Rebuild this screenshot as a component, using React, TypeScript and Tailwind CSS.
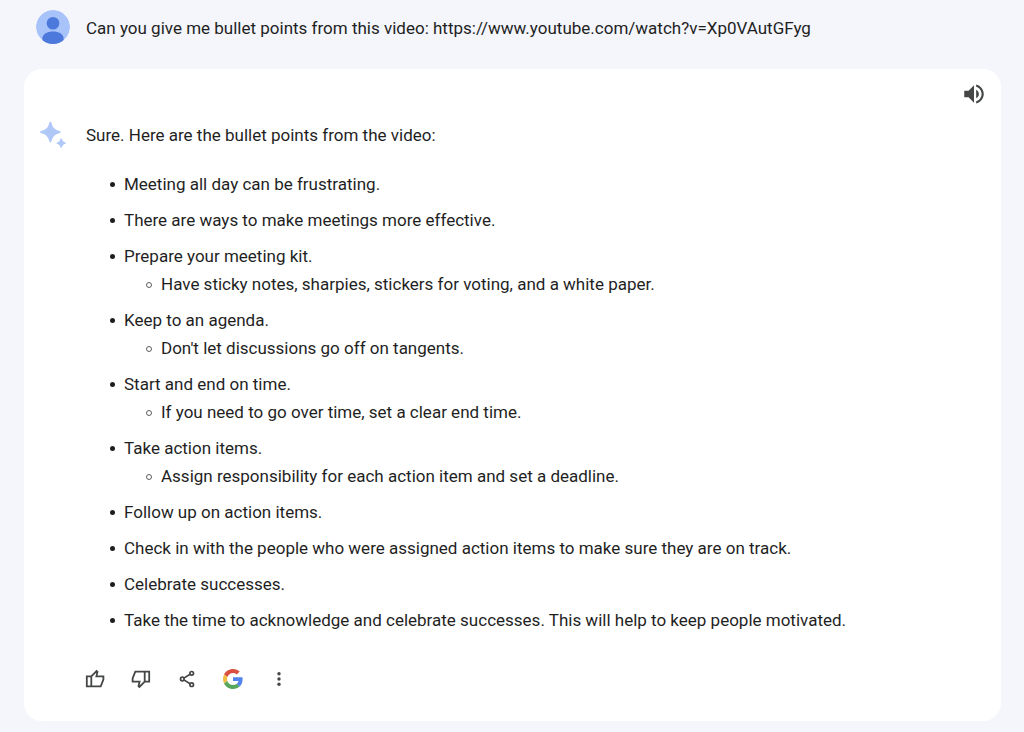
import type { ReactNode } from "react";

type Point = {
  text: string;
  children?: string[];
};

const points: Point[] = [
  { text: "Meeting all day can be frustrating." },
  { text: "There are ways to make meetings more effective." },
  {
    text: "Prepare your meeting kit.",
    children: [
      "Have sticky notes, sharpies, stickers for voting, and a white paper.",
    ],
  },
  {
    text: "Keep to an agenda.",
    children: ["Don't let discussions go off on tangents."],
  },
  {
    text: "Start and end on time.",
    children: ["If you need to go over time, set a clear end time."],
  },
  {
    text: "Take action items.",
    children: [
      "Assign responsibility for each action item and set a deadline.",
    ],
  },
  { text: "Follow up on action items." },
  {
    text: "Check in with the people who were assigned action items to make sure they are on track.",
  },
  { text: "Celebrate successes." },
  {
    text: "Take the time to acknowledge and celebrate successes. This will help to keep people motivated.",
  },
];

function Avatar() {
  return (
    <svg viewBox="0 0 34 34" className="size-[34px] shrink-0" aria-hidden="true">
      <defs>
        <clipPath id="avatar-clip">
          <circle cx="17" cy="17" r="17" />
        </clipPath>
      </defs>
      <g clipPath="url(#avatar-clip)">
        <circle cx="17" cy="17" r="17" fill="#a8c3fa" />
        <circle cx="17" cy="13.2" r="6.3" fill="#4d79dc" />
        <path
          d="M6.4 34v-5.6C6.4 24 11.5 21.6 17 21.6S27.6 24 27.6 28.4V34z"
          fill="#4d79dc"
        />
      </g>
    </svg>
  );
}

function Sparkle() {
  return (
    <svg
      viewBox="0 0 34 34"
      className="size-[34px] shrink-0"
      fill="#afc8f8"
      aria-hidden="true"
    >
      <path d="M14.4 3.8c.8 0 .9.6 1.1 1.3 1.2 4.5 3.4 6.7 7.9 7.9.8.2 1.3.4 1.3 1.1s-.5.9-1.3 1.1c-4.5 1.2-6.7 3.4-7.9 7.9-.2.8-.3 1.3-1.1 1.3s-.9-.5-1.1-1.3c-1.2-4.5-3.4-6.7-7.9-7.9-.8-.2-1.3-.4-1.3-1.1s.5-.9 1.3-1.1c4.5-1.2 6.7-3.4 7.9-7.9.2-.7.3-1.3 1.1-1.3z" />
      <path d="M25.2 20.2c.5 0 .6.3.7.7.6 2 1.5 3 3.4 3.5.4.1.7.3.7.7s-.3.6-.7.7c-1.9.5-2.8 1.5-3.4 3.5-.1.4-.2.7-.7.7s-.6-.3-.7-.7c-.6-2-1.5-3-3.4-3.5-.4-.1-.7-.3-.7-.7s.3-.6.7-.7c1.9-.5 2.8-1.5 3.4-3.5.1-.4.2-.7.7-.7z" />
    </svg>
  );
}

function ThumbIcon({ down = false }: { down?: boolean }) {
  return (
    <svg
      viewBox="0 0 24 24"
      className={down ? "size-6 rotate-180" : "size-6"}
      fill="none"
      stroke="currentColor"
      strokeWidth="1.8"
    >
      <path d="M8.3 9.4 13.6 4l.9.8-1.1 4.6h7v3.2l-2.7 6.8H3.8v-10h4.5v10" />
    </svg>
  );
}

function ShareIcon() {
  return (
    <svg
      viewBox="0 0 24 24"
      className="size-6"
      fill="none"
      stroke="currentColor"
      strokeWidth="1.7"
    >
      <path d="m8.9 11.1 6.2-3.9M8.9 12.9l6.2 3.9" />
      <circle cx="7.3" cy="12" r="1.8" />
      <circle cx="16.7" cy="6.3" r="1.8" />
      <circle cx="16.7" cy="17.7" r="1.8" />
    </svg>
  );
}

function GoogleIcon() {
  return (
    <svg viewBox="0 0 48 48" className="size-5">
      <path
        fill="#d9503f"
        d="M24 9.5c3.54 0 6.71 1.22 9.21 3.6l6.85-6.85C35.9 2.38 30.47 0 24 0 14.62 0 6.51 5.38 2.56 13.22l7.98 6.19C12.43 13.72 17.74 9.5 24 9.5z"
      />
      <path
        fill="#5383ec"
        d="M46.98 24.55c0-1.57-.15-3.09-.38-4.55H24v9.02h12.94c-.58 2.96-2.26 5.48-4.78 7.18l7.73 6c4.51-4.18 7.09-10.36 7.09-17.65z"
      />
      <path
        fill="#f2bd42"
        d="M10.53 28.59c-.48-1.45-.76-2.99-.76-4.59s.27-3.14.76-4.59l-7.98-6.19C.92 16.46 0 20.12 0 24c0 3.88.92 7.54 2.56 10.78l7.97-6.19z"
      />
      <path
        fill="#58a65c"
        d="M24 48c6.48 0 11.93-2.13 15.89-5.81l-7.73-6c-2.15 1.45-4.92 2.3-8.16 2.3-6.26 0-11.57-4.22-13.47-9.91l-7.98 6.19C6.51 42.62 14.62 48 24 48z"
      />
    </svg>
  );
}

function MoreIcon() {
  return (
    <svg viewBox="0 0 24 24" className="size-6" fill="currentColor">
      <circle cx="12" cy="6.7" r="1.7" />
      <circle cx="12" cy="12" r="1.7" />
      <circle cx="12" cy="17.3" r="1.7" />
    </svg>
  );
}

function SpeakerIcon() {
  return (
    <svg viewBox="0 0 24 24" className="size-[26px]" fill="currentColor">
      <path d="M3 9v6h4l5 5V4L7 9H3zm13.5 3c0-1.77-1.02-3.29-2.5-4.03v8.05c1.48-.73 2.5-2.25 2.5-4.02zM14 3.23v2.06c2.89.86 5 3.54 5 6.71s-2.11 5.85-5 6.71v2.06c4.01-.91 7-4.49 7-8.77s-2.99-7.86-7-8.77z" />
    </svg>
  );
}

function IconButton({
  label,
  children,
}: {
  label: string;
  children: ReactNode;
}) {
  return (
    <button
      type="button"
      aria-label={label}
      className="flex size-6 cursor-pointer items-center justify-center text-[#444746]"
    >
      {children}
    </button>
  );
}

export default function App() {
  return (
    <div className="min-h-screen bg-[#f4f6fc] pb-[11px] font-['Roboto',sans-serif] text-[17px] leading-7 text-[#1f1f1f]">
      <div className="flex items-start gap-4 px-9 pt-[10px]">
        <Avatar />
        <p className="mt-1">
          Can you give me bullet points from this video:
          https://www.youtube.com/watch?v=Xp0VAutGFyg
        </p>
      </div>

      <main className="mr-[23px] ml-6 mt-[25px] rounded-[18px] bg-white px-3 pt-3 pb-[30px]">
        <div className="flex justify-end pr-[2px]">
          <button
            type="button"
            aria-label="Listen"
            className="cursor-pointer text-[#444746]"
          >
            <SpeakerIcon />
          </button>
        </div>

        <div className="mt-[11px] flex gap-4">
          <Sparkle />
          <div className="min-w-0 flex-1">
            <p className="mt-[3px]">
              Sure. Here are the bullet points from the video:
            </p>
            <ul className="mt-[21px] flex flex-col gap-2 pl-6">
              {points.map((point) => (
                <li key={point.text} className="flex gap-[9px]">
                  <span className="mt-3 size-[5px] shrink-0 rounded-full bg-[#1f1f1f]" />
                  <div>
                    {point.text}
                    {point.children && (
                      <ul className="pl-[22px]">
                        {point.children.map((child) => (
                          <li key={child} className="flex gap-[9px]">
                            <span className="mt-3 size-[6px] shrink-0 rounded-full border border-[#5f5f5f]" />
                            {child}
                          </li>
                        ))}
                      </ul>
                    )}
                  </div>
                </li>
              ))}
            </ul>

            <div className="mt-[33px] -ml-[3px] flex items-center gap-[22px]">
              <IconButton label="Good response">
                <ThumbIcon />
              </IconButton>
              <IconButton label="Bad response">
                <ThumbIcon down />
              </IconButton>
              <IconButton label="Share">
                <ShareIcon />
              </IconButton>
              <IconButton label="Google it">
                <GoogleIcon />
              </IconButton>
              <IconButton label="More">
                <MoreIcon />
              </IconButton>
            </div>
          </div>
        </div>
      </main>
    </div>
  );
}
